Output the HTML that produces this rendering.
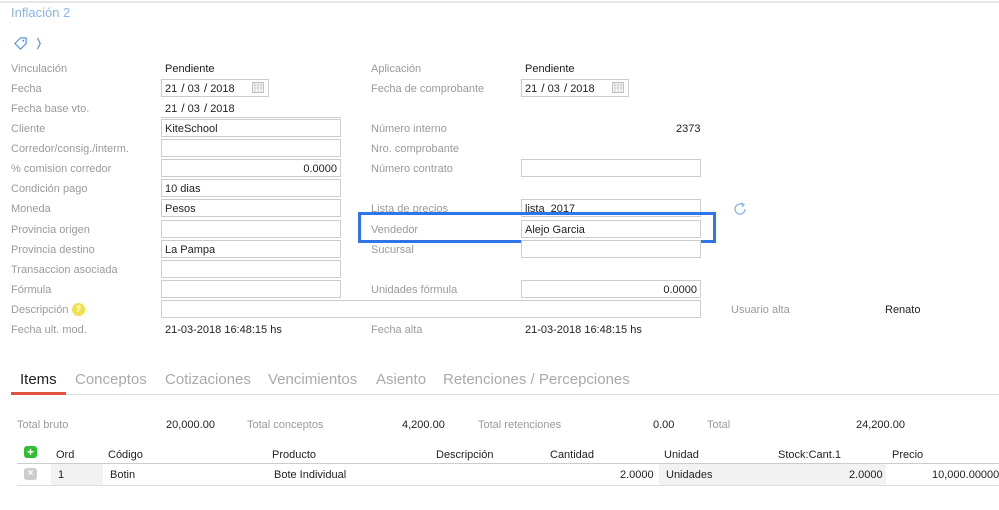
<!DOCTYPE html>
<html><head><meta charset="utf-8"><style>
*{margin:0;padding:0;box-sizing:border-box}
body{width:999px;height:510px;background:#fff;font-family:"Liberation Sans",sans-serif;font-size:11px;color:#222;position:relative;overflow:hidden}
.a{position:absolute;white-space:nowrap;padding-top:1px}
.l{color:#9a9a9a}
.i{position:absolute;height:18px;border:1px solid #ccc;background:#fff;padding:1px 3px 0;line-height:16px}
.r{text-align:right}
.tab{position:absolute;top:371px;font-size:15px;color:#aaa}
.s{font-size:12px;line-height:0;padding:0 3px 0 4px}
</style></head><body>
<div class="a" style="left:0;top:1px;width:999px;height:2px;background:#e6e6e6;padding:0"></div>
<div class="a" style="left:11px;top:4px;font-size:13px;color:#8db3e6">Inflación 2</div>
<svg class="a" style="left:12px;top:35px" width="32" height="16" viewBox="0 0 32 16"><path d="M2 8 L8 2 L14 2 L14 8 L8 14 Z" fill="none" stroke="#4a8de0" stroke-width="1.2"/><circle cx="11" cy="5" r="1" fill="#4a8de0"/><path d="M26 2 L29 8 L26 14" fill="none" stroke="#4a8de0" stroke-width="1.2"/></svg>

<div class="a l" style="left:11px;top:62px">Vinculación</div><div class="a" style="left:165px;top:62px">Pendiente</div>
<div class="a l" style="left:371px;top:62px">Aplicación</div><div class="a" style="left:525px;top:62px">Pendiente</div>

<div class="a l" style="left:11px;top:82px">Fecha</div>
<div class="i" style="left:161px;top:79px;width:108px">21<span class="s">/</span>03<span class="s">/</span>2018</div>
<div class="a l" style="left:371px;top:82px">Fecha de comprobante</div>
<div class="i" style="left:521px;top:79px;width:108px">21<span class="s">/</span>03<span class="s">/</span>2018</div>
<svg class="a" style="left:252px;top:81px;padding:0" width="12" height="12"><rect x="0.5" y="1.5" width="11" height="10" fill="none" stroke="#bbb"/><path d="M0 4h12M3 1v10M6 1v10M9 1v10M0 7h12" stroke="#ccc"/></svg>
<svg class="a" style="left:612px;top:81px;padding:0" width="12" height="12"><rect x="0.5" y="1.5" width="11" height="10" fill="none" stroke="#bbb"/><path d="M0 4h12M3 1v10M6 1v10M9 1v10M0 7h12" stroke="#ccc"/></svg>

<div class="a l" style="left:11px;top:102px">Fecha base vto.</div><div class="a" style="left:165px;top:102px">21<span class="s">/</span>03<span class="s">/</span>2018</div>
<div class="a" style="left:161px;top:117px;width:180px;height:1px;background:#ccc;padding:0"></div>

<div class="a l" style="left:11px;top:122px">Cliente</div><div class="i" style="left:161px;top:119px;width:180px">KiteSchool</div>
<div class="a l" style="left:371px;top:122px">Número interno</div><div class="a" style="left:676px;top:122px">2373</div>
<div class="a l" style="left:11px;top:142px">Corredor/consig./interm.</div><div class="i" style="left:161px;top:139px;width:180px"></div>
<div class="a l" style="left:371px;top:142px">Nro. comprobante</div>
<div class="a l" style="left:11px;top:162px">% comision corredor</div><div class="i r" style="left:161px;top:159px;width:180px">0.0000</div>
<div class="a l" style="left:371px;top:162px">Número contrato</div><div class="i" style="left:521px;top:159px;width:180px"></div>
<div class="a l" style="left:11px;top:182px">Condición pago</div><div class="i" style="left:161px;top:179px;width:180px">10 dias</div>
<div class="a l" style="left:11px;top:202px">Moneda</div><div class="i" style="left:161px;top:199px;width:180px">Pesos</div>
<div class="a l" style="left:371px;top:202px">Lista de precios</div><div class="i" style="left:521px;top:199px;width:180px">lista_2017</div>
<svg class="a" style="left:732px;top:201px;padding:0" width="16" height="16" viewBox="0 0 16 16"><path d="M13 8 A5 5 0 1 1 10.5 3.7" fill="none" stroke="#8db3e6" stroke-width="1.3"/><path d="M9 2 L12 3.5 L10 6" fill="none" stroke="#8db3e6" stroke-width="1.3"/></svg>
<div class="a l" style="left:11px;top:223px">Provincia origen</div><div class="i" style="left:161px;top:220px;width:180px"></div>
<div class="a l" style="left:371px;top:223px">Vendedor</div><div class="i" style="left:521px;top:220px;width:180px">Alejo Garcia</div>
<div class="a" style="left:358px;top:212px;width:358px;height:31px;border:3px solid #2f75e8;padding:0"></div>
<div class="a l" style="left:11px;top:243px">Provincia destino</div><div class="i" style="left:161px;top:240px;width:180px">La Pampa</div>
<div class="a l" style="left:371px;top:243px">Sucursal</div><div class="i" style="left:521px;top:240px;width:180px"></div>
<div class="a l" style="left:11px;top:263px">Transaccion asociada</div><div class="i" style="left:161px;top:260px;width:180px"></div>
<div class="a l" style="left:11px;top:283px">Fórmula</div><div class="i" style="left:161px;top:280px;width:180px"></div>
<div class="a l" style="left:371px;top:283px">Unidades fórmula</div><div class="i r" style="left:521px;top:280px;width:180px">0.0000</div>
<div class="a l" style="left:11px;top:303px">Descripción</div>
<div class="a" style="left:72px;top:303px;width:13px;height:13px;border-radius:50%;background:#f2e04a;color:#fff;font-size:9px;font-weight:bold;text-align:center;line-height:13px;padding:0">?</div>
<div class="i" style="left:161px;top:300px;width:540px"></div>
<div class="a l" style="left:731px;top:303px">Usuario alta</div><div class="a" style="left:885px;top:303px">Renato</div>
<div class="a l" style="left:11px;top:323px">Fecha ult. mod.</div><div class="a" style="left:165px;top:323px">21-03-2018 16:48:15 hs</div>
<div class="a l" style="left:371px;top:323px">Fecha alta</div><div class="a" style="left:525px;top:323px">21-03-2018 16:48:15 hs</div>

<div class="tab" style="left:20px;color:#222">Items</div>
<div class="tab" style="left:75px">Conceptos</div>
<div class="tab" style="left:165px">Cotizaciones</div>
<div class="tab" style="left:268px">Vencimientos</div>
<div class="tab" style="left:376px">Asiento</div>
<div class="tab" style="left:443px">Retenciones / Percepciones</div>
<div class="a" style="left:11px;top:394px;width:988px;height:1px;background:#ddd;padding:0"></div>
<div class="a" style="left:11px;top:392px;width:55px;height:3px;background:#e2533e;padding:0"></div>

<div class="a l" style="left:17px;top:418px">Total bruto</div><div class="a" style="left:166px;top:418px">20,000.00</div>
<div class="a l" style="left:247px;top:418px">Total conceptos</div><div class="a" style="left:402px;top:418px">4,200.00</div>
<div class="a l" style="left:478px;top:418px">Total retenciones</div><div class="a" style="left:653px;top:418px">0.00</div>
<div class="a l" style="left:707px;top:418px">Total</div><div class="a" style="left:856px;top:418px">24,200.00</div>

<div class="a" style="left:24px;top:446px;width:13px;height:12px;border-radius:3px;background:#2fbf2f;color:#fff;font-weight:bold;text-align:center;line-height:12px;font-size:12px;padding:0">+</div>
<div class="a" style="left:56px;top:448px">Ord</div>
<div class="a" style="left:108px;top:448px">Código</div>
<div class="a" style="left:272px;top:448px">Producto</div>
<div class="a" style="left:436px;top:448px">Descripción</div>
<div class="a" style="left:550px;top:448px">Cantidad</div>
<div class="a" style="left:664px;top:448px">Unidad</div>
<div class="a" style="left:778px;top:448px">Stock:Cant.1</div>
<div class="a" style="left:892px;top:448px">Precio</div>
<div class="a" style="left:17px;top:463px;width:982px;height:1px;background:#ccc;padding:0"></div>
<div class="a" style="left:51px;top:464px;width:52px;height:21px;background:#f2f2f2;padding:0"></div>
<div class="a" style="left:659px;top:464px;width:227px;height:21px;background:#f2f2f2;padding:0"></div>
<div class="a" style="left:24px;top:468px;width:13px;height:12px;border-radius:3px;background:#ccc;color:#fff;font-weight:bold;text-align:center;line-height:12px;font-size:10px;padding:0">×</div>
<div class="a" style="left:58px;top:468px">1</div>
<div class="a" style="left:110px;top:468px">Botin</div>
<div class="a" style="left:274px;top:468px">Bote Individual</div>
<div class="a" style="left:620px;top:468px">2.0000</div>
<div class="a" style="left:666px;top:468px">Unidades</div>
<div class="a" style="left:849px;top:468px">2.0000</div>
<div class="a" style="left:932px;top:468px">10,000.00000</div>
<div class="a" style="left:17px;top:485px;width:982px;height:1px;background:#ddd;padding:0"></div>
</body></html>
